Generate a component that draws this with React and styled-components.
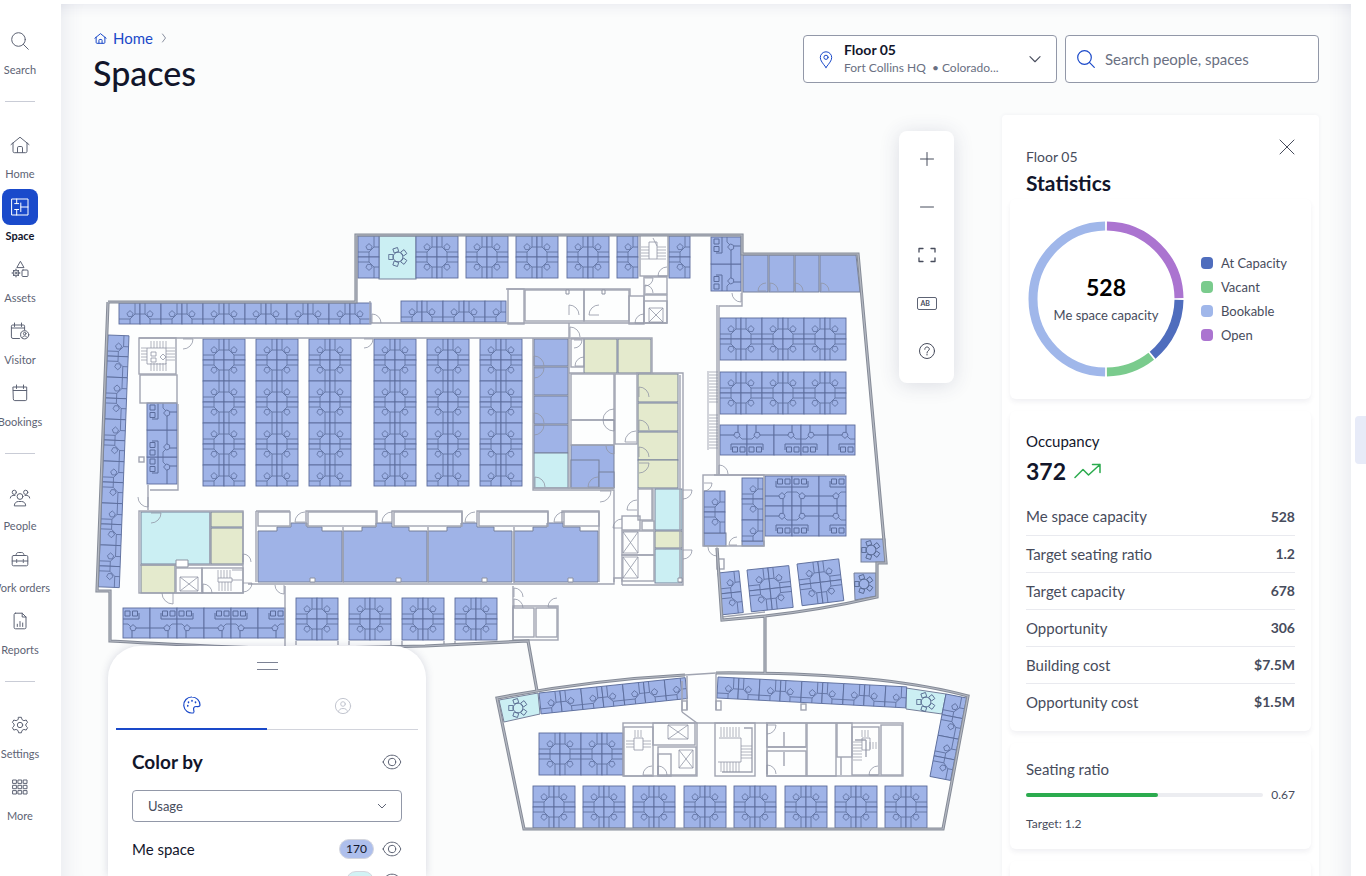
import React from 'react'
import styled, { createGlobalStyle } from 'styled-components'

const GlobalStyle = createGlobalStyle`
    * {
        box-sizing: border-box;
    }
    body {
        margin: 0;
        background-color: #fff;
        color: #474c5c;
        font-family: Lato, "Noto Sans", sans-serif;
        font-size: 14px;
    }
    button, input, select {
        font-family: inherit;
        color: inherit;
    }
    button {
        padding: 0;
        border: 0;
        background: none;
        cursor: pointer;
    }
    svg {
        flex: none;
    }
`

/* ---------- page ---------- */

const Page = styled.div`
    display: flex;
    height: 100vh;
    padding-top: 4px;
    overflow: hidden;
`
const Sidebar = styled.nav`
    flex: 0 0 61px;
    display: flex;
    justify-content: center;
    padding: 19px 21px 0 0;
    overflow: hidden;
    background-color: #fff;
`
const NavList = styled.div`
    flex: 0 0 80px;
    display: flex;
    flex-direction: column;
    align-items: center;
`
const NavGroup = styled.div`
    display: flex;
    flex-direction: column;
    gap: 7px;

    & + & {
        margin-top: 23px;
        padding-top: 26px;
        background: linear-gradient(#c9ccd6, #c9ccd6) top center / 30px 1px no-repeat;
    }
`
const NavItem = styled.a`
    display: flex;
    flex-direction: column;
    align-items: center;
    gap: 3px;
    width: 80px;
    font-size: 11px;
    line-height: 16px;
    font-weight: ${p => (p.$active ? 700 : 400)};
    color: ${p => (p.$active ? '#12162b' : '#5d6374')};
    text-decoration: none;
`
const NavIcon = styled.span`
    display: flex;
    align-items: center;
    justify-content: center;
    width: 36px;
    height: 36px;
    border-radius: 8px;
    background-color: ${p => (p.$active ? '#1a4acb' : 'transparent')};
    color: ${p => (p.$active ? '#fff' : '#5d6374')};
`
const Main = styled.main`
    flex: 1;
    min-width: 0;
    display: flex;
    flex-direction: column;
    padding: 0 32px;
    background-color: #fbfcfc;
    box-shadow: inset 24px 0 20px -20px rgba(70, 75, 130, 0.1), inset -24px 0 20px -20px rgba(70, 75, 130, 0.1),
        inset 0 14px 14px -13px rgba(70, 75, 130, 0.12);
`
const RightRail = styled.div`
    flex: 0 0 15px;
    display: flex;
    justify-content: flex-end;
    align-items: center;
    background-color: #fff;
`
const RailHandle = styled.button`
    width: 11px;
    height: 48px;
    border-radius: 4px 0 0 4px;
    background-color: #e7ebf8;
`

/* ---------- header ---------- */

const Header = styled.header`
    display: flex;
    justify-content: space-between;
    height: 111px;
    padding-top: 23px;
`
const Crumbs = styled.div`
    display: flex;
    align-items: center;
    gap: 5px;
    height: 22px;
    color: #8a90a0;
`
const CrumbLink = styled.a`
    display: flex;
    align-items: center;
    gap: 5px;
    font-size: 15px;
    color: #1a49c9;
    text-decoration: none;
`
const Title = styled.h1`
    margin: 4px 0 0;
    font-size: 34px;
    line-height: 40px;
    font-weight: 500;
    color: #12162b;
`
const Pickers = styled.div`
    display: flex;
    gap: 8px;
    padding-top: 8px;
`
const FloorPicker = styled.button`
    display: flex;
    align-items: center;
    gap: 6px;
    width: 254px;
    height: 48px;
    padding: 0 10px;
    border: 1px solid #9298a8;
    border-radius: 4px;
    background-color: #fff;
    text-align: left;
`
const PickerText = styled.span`
    flex: 1;
    display: flex;
    flex-direction: column;
    font-size: 12px;
    line-height: 18px;
    color: #6a7082;
    white-space: pre;
`
const PickerName = styled.strong`
    font-size: 14px;
    color: #12162b;
`
const SearchBox = styled.label`
    display: flex;
    align-items: center;
    gap: 5px;
    width: 254px;
    height: 48px;
    padding: 0 8px;
    border: 1px solid #9298a8;
    border-radius: 4px;
    background-color: #fff;
`
const SearchInput = styled.input`
    flex: 1;
    min-width: 0;
    border: 0;
    outline: 0;
    background: none;
    font-size: 15px;

    &::placeholder {
        color: #6a7082;
        opacity: 1;
    }
`
const BlueIcon = styled.span`
    display: flex;
    color: #1a49c9;
`

/* ---------- map ---------- */

const Stage = styled.div`
    flex: 1;
    min-height: 0;
    display: flex;
`
const Canvas = styled.section`
    position: relative;
    flex: 1;
    min-width: 0;
`
const Plan = styled.svg`
    display: block;
    width: 100%;
    height: 100%;
`
const Tools = styled.div`
    position: absolute;
    top: 16px;
    right: 48px;
    width: 55px;
    padding: 4px 0 8px;
    border-radius: 8px;
    background-color: #fff;
    box-shadow: 0 2px 20px rgba(50, 55, 100, 0.16);
`
const ToolButton = styled.button`
    display: flex;
    align-items: center;
    justify-content: center;
    width: 100%;
    height: 48px;
    color: #474c5c;
`
const LabelBox = styled.span`
    width: 20px;
    height: 13px;
    padding-left: 3px;
    border: 1px solid #5d6374;
    border-radius: 2px;
    font-size: 7px;
    line-height: 11px;
    font-weight: 700;
    text-align: left;
`
const Sheet = styled.section`
    position: absolute;
    left: 15px;
    bottom: 0;
    width: 318px;
    height: 230px;
    padding: 16px 8px 0;
    overflow: hidden;
    border-radius: 32px 32px 0 0;
    background-color: #fff;
    box-shadow: 0 0 8px rgba(50, 55, 100, 0.18);
`
const Grip = styled.div`
    width: 21px;
    height: 8px;
    margin: 0 auto;
    border: solid #7c8294;
    border-width: 1px 0;
`
const Tabs = styled.div`
    display: flex;
    margin-top: 12px;
`
const Tab = styled.button`
    flex: 1;
    display: flex;
    align-items: center;
    justify-content: center;
    height: 48px;
    border-bottom: ${p => (p.$active ? '2px solid #1a49c9' : '1px solid #d2d4dc')};
    color: ${p => (p.$active ? '#1a49c9' : '#c3c6d0')};
`
const SheetBody = styled.div`
    padding: 16px 16px 0;
`
const SheetRow = styled.div`
    display: flex;
    align-items: center;
    gap: 6px;
    height: 32px;
    margin-right: -2px;
    font-size: 14px;
    color: #12162b;
`
const RowName = styled.span`
    flex: 1;
    font-size: 15px;
`
const SheetTitle = styled.h2`
    flex: 1;
    margin: 0;
    font-size: 19px;
    line-height: 24px;
`
const Eye = styled.button`
    display: flex;
    color: #5d6374;
`
const Count = styled.span`
    padding: 0 6px;
    border: 1px solid #d4d6de;
    border-radius: 10px;
    background-color: ${p => p.$color};
    font-size: 12px;
    line-height: 18px;
`
const SelectWrap = styled.div`
    display: grid;
    align-items: center;
    margin: 12px 0 11px;
    color: #5d6374;

    > * {
        grid-area: 1 / 1;
    }
    > svg {
        justify-self: end;
        margin-right: 12px;
        pointer-events: none;
    }
`
const UsageSelect = styled.select`
    appearance: none;
    width: 100%;
    height: 32px;
    padding: 0 15px;
    border: 1px solid #9298a8;
    border-radius: 4px;
    background-color: #fff;
    font-size: 13px;
    color: #474c5c;
`

/* ---------- statistics ---------- */

const Panel = styled.aside`
    flex: 0 0 317px;
    padding: 0 8px;
    overflow: hidden;
    border-radius: 4px 4px 0 0;
    background-color: #fff;
    box-shadow: 0 0 4px rgba(50, 55, 100, 0.06);
`
const PanelHead = styled.div`
    display: flex;
    justify-content: space-between;
    height: 84px;
    padding: 32px 16px 0;
`
const CloseButton = styled.button`
    display: flex;
    align-items: center;
    justify-content: center;
    width: 16px;
    height: 16px;
    margin-top: -8px;
    color: #474c5c;
`
const Floor = styled.div`
    line-height: 20px;
`
const PanelTitle = styled.h2`
    margin: 4px 0 0;
    font-size: 21px;
    line-height: 24px;
    color: #12162b;
`
const Card = styled.section`
    margin-bottom: 12px;
    padding: ${p => p.$pad || '16px'};
    border-radius: 6px;
    background-color: #fff;
    box-shadow: 0 3px 5px rgba(50, 55, 100, 0.07);
`
const ChartRow = styled.div`
    display: flex;
    align-items: center;
    gap: 16px;
`
const Donut = styled.div`
    display: grid;
    place-items: center;

    > * {
        grid-area: 1 / 1;
    }
`
const DonutText = styled.div`
    font-size: 13px;
    line-height: 20px;
    text-align: center;
`
const DonutValue = styled.strong`
    display: block;
    margin-bottom: 4px;
    font-size: 23px;
    line-height: 28px;
    color: #000;
`
const Legend = styled.ul`
    margin: 0;
    padding: 0;
    list-style: none;
    font-size: 13px;
    line-height: 24px;
`
const LegendItem = styled.li`
    display: flex;
    align-items: center;
    gap: 8px;

    &::before {
        content: '';
        width: 12px;
        height: 12px;
        border-radius: 4px;
        background-color: ${p => p.$color};
    }
`
const CardTitle = styled.h3`
    margin: 0;
    font-size: 15px;
    line-height: 20px;
    font-weight: 400;
    color: ${p => (p.$dark ? '#12162b' : '#474c5c')};
`
const Occupied = styled.div`
    display: flex;
    align-items: center;
    gap: 8px;
    margin: 4px 0 11px;
    font-size: 23px;
    line-height: 32px;
    font-weight: 700;
    color: #12162b;
`
const Trend = styled.span`
    display: flex;
    color: #2bab4e;
`
const Figures = styled.table`
    width: 100%;
    border-collapse: collapse;
    font-size: 15px;

    th, td {
        height: 37px;
        padding: 0;
        border-bottom: 1px solid #e9eaef;
        font-weight: 400;
        text-align: left;
    }
    td {
        font-size: 14px;
        font-weight: 700;
        text-align: right;
    }
    tr:last-child > * {
        border-bottom: 0;
    }
`
const RatioRow = styled.div`
    display: flex;
    align-items: center;
    gap: 8px;
    margin: 6px 0 10px;
    font-size: 12px;
    line-height: 20px;
`
const Track = styled.div`
    flex: 1;
    height: 4px;
    border-radius: 2px;
    background-color: #ecedf1;
`
const Bar = styled.div`
    height: 4px;
    border-radius: 2px;
    background-color: #2bab4e;
`
const Target = styled.div`
    font-size: 12px;
    line-height: 18px;
`

/* ---------- icons ---------- */

const icons = {
    search: <><circle cx="10.5" cy="10.5" r="6.8" /><path d="M15.4 15.4 20.3 20.3" /></>,
    home: <path d="M3 11.6 12 4.2l9 7.4M5 10v8.3a1.4 1.4 0 0 0 1.4 1.4h11.2a1.4 1.4 0 0 0 1.4-1.4V10M9.5 19.5v-4.7a1.3 1.3 0 0 1 1.3-1.3h2.4a1.3 1.3 0 0 1 1.3 1.3v4.7" />,
    space: <path d="M4 4h16v16H4zM8.7 4v4.6M6.7 8.6h4M12.8 8v8.6M12.8 12H20M8.7 14.5V20M6.7 14.5h4" />,
    assets: <><path d="m12.6 4.6 3.4 6H9.2zM15 13h4a1 1 0 0 1 1 1v4.5a1 1 0 0 1-1 1h-4a1 1 0 0 1-1-1V14a1 1 0 0 1 1-1z" /><circle cx="8" cy="16" r="2.9" /><circle cx="8" cy="16" r="1" /><path d="M8 12v1M8 19v1M4 16h1M11 16h1M5.3 13.3l.7.7M10 18l.7.7M5.3 18.7l.7-.7M10 14l.7-.7" /></>,
    visitor: <><path d="M11.500 19.500H5a1.600 1.600 0 0 1-1.600-1.600V7.200A1.200 1.200 0 0 1 4.600 6h10.800a1.200 1.200 0 0 1 1.200 1.200V11M3.400 9h13.200M6.500 4v3.500M13.500 4v3.500" /><circle cx="16.700" cy="15.800" r="4.100" /><circle cx="16.700" cy="14.600" r="1.300" /><path d="M14.500 18.300c.7-2 3.700-2 4.400 0" /></>,
    calendar: <path d="M5.300 6h13.400v12.200a1.400 1.400 0 0 1-1.400 1.400H6.700a1.400 1.400 0 0 1-1.400-1.400zM5.300 9.500h13.400M8.500 4v3.500M15.500 4v3.500" />,
    people: <><circle cx="12" cy="11.500" r="2.900" /><circle cx="6.300" cy="7.300" r="2.100" /><circle cx="17.700" cy="7.300" r="2.100" /><path d="M6.300 20.500c0-2.600 2-4 4.200-4h3c2.200 0 4.200 1.400 4.200 4zM2.300 13c.2-1.800 1.500-3 4.700-2.600M21.700 13c-.2-1.800-1.500-3-4.700-2.600" /></>,
    work: <path d="M5.500 8.500h13a1.300 1.300 0 0 1 1.300 1.300v7.700a1.300 1.300 0 0 1-1.300 1.300h-13a1.300 1.300 0 0 1-1.300-1.300V9.800a1.300 1.300 0 0 1 1.300-1.300zM8 8.500C8 6.500 9 5.500 10.300 5.500h3.400c1.300 0 2.300 1 2.300 3M4.200 14h4M9.500 14h5M16 14h3.800M8.700 12.500v3M15.300 12.500v3" />,
    reports: <path d="M7.500 4.200h6.700l3.800 3.800v10.400a1.400 1.400 0 0 1-1.400 1.400H7.500A1.400 1.400 0 0 1 6.100 18.400V5.600a1.400 1.400 0 0 1 1.400-1.400zM14.200 4.200V8H18M9.300 17.500v-2.300M12 17.500v-5M14.700 17.500v-3.500" />,
    settings: <><circle cx="12" cy="12" r="2.700" /><path d="M10.600 4.300h2.800l.6 2.300 1.900 1.100 2.300-.7 1.400 2.400-1.700 1.600v2l1.700 1.700-1.400 2.400-2.300-.7-1.900 1.100-.6 2.300h-2.800L10 17.500l-1.900-1.100-2.300.7-1.400-2.400L6.100 13v-2L4.400 9.400 5.800 7l2.300.7L10 6.600z" /></>,
    more: <path d="M5 5h3.400v3.400H5zM10.300 5h3.400v3.400h-3.400zM15.600 5H19v3.400h-3.400zM5 10.300h3.400v3.400H5zM10.300 10.300h3.400v3.400h-3.400zM15.600 10.300H19v3.400h-3.400zM5 15.600h3.400V19H5zM10.300 15.600h3.400V19h-3.400zM15.600 15.600H19V19h-3.400z" />,
    pin: <><path d="M12 20.500c-3.200-4.300-5.700-6.800-5.700-10a5.700 5.700 0 0 1 11.400 0c0 3.200-2.500 5.700-5.700 10z" /><circle cx="12" cy="10.300" r="2.100" /></>,
    down: <path d="m6.500 9.500 5.500 5.500 5.500-5.500" />,
    right: <path d="m9 4 6 8-6 8" />,
    plus: <path d="M12 5.500v13M5.500 12h13" />,
    minus: <path d="M5.500 12h13" />,
    frame: <path d="M4 9V5.500h4M16 5.500h4V9M20 15v3.500h-4M8 18.500H4V15" />,
    help: <><circle cx="12" cy="12" r="7.500" /><path d="M9.800 10.300c0-1.500 1-2.300 2.200-2.300s2.300.8 2.300 2.100c0 1.700-2.300 1.700-2.300 3.500M12 15v1" /></>,
    close: <path d="m5 5 14 14M19 5 5 19" />,
    trend: <path d="m1 18.500 8-8 5.500 5.500L26 5.500M18.500 5.500H26v8" />,
    palette: <><path d="M12 4a8 8 0 1 0 1.500 15.800c1-.3.500-1.600.2-2.700-.5-2 .3-3.600 2.500-3.600 1.500 0 3.800.5 3.800-1.500A8 8 0 0 0 12 4z" /><path d="M7.800 12.500v.6M8.500 9v.6M12 7.500v.6M15.500 9v.6" strokeWidth="1.600" /></>,
    person: <><circle cx="12" cy="12" r="7.600" /><circle cx="12" cy="10" r="2.300" /><path d="M7.500 17.800c.4-2.400 2-3.300 4.500-3.300s4.100.9 4.500 3.300" /></>,
    eye: <><path d="M3.200 12C5 7.300 8 5.200 12 5.200s7 2.100 8.800 6.800c-1.800 4.700-4.800 6.800-8.800 6.800S5 16.700 3.200 12z" /><circle cx="12" cy="12" r="3.700" /></>,
}

const Icon = ({ name, size = 24, width = 24, weight = 1 }) => (
    <svg width={size * width / 24} height={size} viewBox={`0 0 ${width} 24`} fill="none" stroke="currentColor"
        strokeWidth={weight} strokeLinecap="round" strokeLinejoin="round" aria-hidden="true">
        {icons[name]}
    </svg>
)

/* ---------- floor plan ---------- */

const BLUE = '#9fb3e7'
const CYAN = '#cbeff3'
const OLIVE = '#e4eacd'

// grid of desks, every second one is mirrored so that four make a pod
const Desks = ({ x, y, cols = 1, rows = 1, turn = 0, flipX = 0, flipY = 0, kind = 'desk' }) => {
    const w = kind === 'desk' ? 21 : 27
    const h = kind === 'desk' ? 21 : 30
    const cells = []
    for (let r = 0; r < rows; r++) {
        for (let c = 0; c < cols; c++) {
            const mx = (c + flipX) % 2
            const my = (r + flipY) % 2
            cells.push(
                <use key={`${r}-${c}`} href={`#${kind}`}
                    transform={`translate(${(c + mx) * w} ${(r + my) * h}) scale(${mx ? -1 : 1} ${my ? -1 : 1})`} />
            )
        }
    }
    return <g transform={`translate(${x} ${y}) rotate(${turn})`}>{cells}</g>
}

const Door = ({ x, y, r = 10, turn = 0 }) => (
    <path d={`M0 0V${-r}A${r} ${r} 0 0 1 ${r} 0`} transform={`translate(${x} ${y}) rotate(${turn})`} />
)

const Lift = ({ x, y, w, h }) => <path d={`M${x} ${y}h${w}v${h}h${-w}zl${w} ${h}M${x + w} ${y}l${-w} ${h}`} />

const Steps = ({ x, y, w, h, step = 3 }) => {
    let d = ''
    if (w > h) for (let i = 0; i <= w; i += step) d += `M${x + i} ${y}v${h}`
    else for (let i = 0; i <= h; i += step) d += `M${x} ${y + i}h${w}`
    return <path d={d} strokeWidth="0.7" />
}

const RoundTable = ({ x, y }) => (
    <g transform={`translate(${x} ${y})`} fill="none" stroke="#4f6189" strokeWidth="0.8">
        <circle r="4.800" />
        {[0, 72, 144, 216, 288].map(a => (
            <rect key={a} x="5" y="-2.400" width="4.200" height="4.800" transform={`rotate(${a + 36})`} />
        ))}
    </g>
)

const rooms = [
    [379, 236, 37, 43, CYAN],
    [534, 339, 34, 27, BLUE], [534, 367, 34, 28, BLUE], [534, 396, 34, 28, BLUE], [534, 425, 34, 28, BLUE],
    [534, 453, 34, 35, CYAN],
    [584, 339, 33, 34, OLIVE], [618, 339, 33, 34, OLIVE],
    [638, 374, 40, 28, OLIVE], [638, 403, 40, 28, OLIVE], [638, 432, 40, 28, OLIVE], [638, 460, 40, 28, OLIVE],
    [571, 445, 43, 43, BLUE], [571, 460, 28, 28, BLUE], [599, 472, 15, 16, BLUE],
    [655, 489, 27, 41, CYAN], [655, 531, 27, 17, OLIVE], [655, 549, 27, 34, CYAN],
    [141, 512, 69, 52, CYAN], [211, 512, 32, 15, OLIVE], [211, 528, 32, 36, OLIVE], [141, 565, 34, 28, OLIVE],
    [743, 255, 25, 37, BLUE], [769, 255, 25, 37, BLUE], [795, 255, 24, 37, BLUE],
    [742, 541, 22, 5, BLUE], [704, 533, 22, 13, BLUE],
    [861, 539, 24, 23, BLUE],
]

const walls = [
    [508, 289, 16, 35], [525, 290, 59, 31], [584, 290, 45, 31], [629, 296, 15, 28], [644, 295, 23, 28], [644, 301, 23, 22],
    [139, 338, 37, 36], [140, 375, 37, 28],
    [571, 374, 43, 46], [571, 420, 43, 25], [615, 374, 22, 70], [571, 339, 13, 28],
    [258, 512, 32, 14], [308, 512, 68, 14], [394, 512, 68, 14], [479, 512, 69, 14], [564, 512, 35, 14],
    [139, 511, 104, 82], [176, 568, 26, 25], [202, 568, 41, 25],
    [513, 608, 21, 29], [536, 608, 21, 29], [513, 606, 45, 34],
    [638, 489, 15, 31], [622, 516, 18, 14], [622, 531, 32, 24], [622, 555, 32, 26], [642, 521, 12, 9],
    [623, 723, 74, 53], [624, 727, 29, 49], [653, 723, 42, 22], [658, 747, 38, 28], [658, 754, 13, 22],
    [715, 723, 40, 53], [767, 723, 136, 53], [767, 723, 39, 24], [767, 751, 39, 25], [807, 723, 29, 53],
    [837, 723, 15, 34], [852, 727, 27, 48], [881, 725, 21, 50],
    [703, 475, 61, 71], [717, 559, 7, 10], [640, 235, 28, 41], [644, 277, 23, 17],
    [682, 701, 5, 9], [716, 701, 5, 9], [801, 704, 5, 6], [139, 457, 5, 5],
]

const FLOOR = 'M108 302H356V235H742V254H858L886 563H877V597Q820 610 765 616L722 620L717 548M765 616V674'
const SOUTH_EAST = 'M108 302L97 591H110V641Q180 645 285 649L425 646L528 641L537 691'
const WING = 'M685 675Q590 680 497 698L524 829H943L968 696Q880 672 716 673'

const FloorPlan = () => (
    <Plan viewBox="93 115 909 761" preserveAspectRatio="xMinYMin meet" role="img" aria-label="Floor 05 plan">
        <defs>
            <g id="desk" fill="none" stroke="#5b6c9b" strokeWidth="0.9">
                <rect width="21" height="21" fill={BLUE} />
                <path d="M16 0V11L11 16H0M11 16V21M16 11H21" strokeWidth="0.8" />
                <path d="M11 7.600L14.200 10.500L12.800 13.600H9.400L7.900 10.500Z" fill={BLUE} strokeWidth="0.8" />
            </g>
            <g id="office" fill="none" stroke="#5b6c9b" strokeWidth="0.9">
                <rect width="27" height="30" fill={BLUE} />
                <path d="M2 3h5v5H2zM9.500 3h5v5h-5zM0 11H16V5M12 20H27M9 23V30" strokeWidth="1" />
                <path d="M0 16H5L8 19" strokeWidth="0.8" />
                <path d="M10 16.600L13.200 19.500L11.800 22.600H8.400L6.900 19.500Z" fill={BLUE} />
            </g>
        </defs>

        <path d="M108 302H356V235H742V254H858L886 563H877V597L765 616V674L716 673L685 675L537 691L528 641L285 649L110 641V591H97Z" fill="#fdfefe" />
        <path d={WING} fill="#fdfefe" />

        <g stroke="#76809a" strokeWidth="1">
            {rooms.map(([x, y, w, h, fill]) => (
                <rect key={`${x}-${y}`} x={x} y={y} width={w} height={h} fill={fill} />
            ))}
            <path d="M820 255H856L860 292H820Z" fill={BLUE} />
            <path d="M854 573H876V596L855 600Z" fill={BLUE} />
            <path d="M499 700L538 693L540 714L504 722Z" fill={CYAN} />
            <path d="M906 688L946 694L942 714L906 709Z" fill={CYAN} />
            {[258, 343, 428, 514].map(x => (
                <path key={x} fill={BLUE}
                    d={x === 258
                        ? 'M258 582V531H277V527H291V523H307V527H322V531H342V582Z'
                        : `M${x} 582V531h19v-4h14v-4h16v4h17v4h18V582Z`} />
            ))}
        </g>

        <Desks x={358} y={236} rows={2} />
        {[416, 466, 516, 567].map(x => <Desks key={x} x={x} y={236} cols={2} rows={2} />)}
        <Desks x={617} y={236} rows={2} />
        <Desks x={669} y={236} rows={2} />
        <Desks x={711} y={291} cols={2} turn={-90} kind="office" />
        <Desks x={119} y={303} cols={12} />
        <Desks x={401} y={301} cols={5} />
        <Desks x={108} y={335} rows={12} turn={2.200} />
        <Desks x={147} y={484} cols={3} flipX={1} turn={-90} kind="office" />
        {[203, 256, 309, 374, 427, 480].map(x => <Desks key={x} x={x} y={339} cols={2} rows={7} />)}
        <Desks x={720} y={318} cols={6} rows={2} />
        <Desks x={720} y={372} cols={6} rows={2} />
        <Desks x={720} y={425} cols={5} flipX={1} flipY={1} kind="office" />
        <Desks x={765} y={476} cols={3} rows={2} flipX={1} kind="office" />
        <Desks x={742} y={478} rows={3} />
        <Desks x={704} y={491} rows={2} />
        <Desks x={718} y={573} rows={2} turn={-6} />
        <Desks x={747} y={570} cols={2} rows={2} turn={-6} />
        <Desks x={797} y={564} cols={2} rows={2} turn={-7} />
        <Desks x={123} y={608} cols={6} kind="office" />
        {[296, 349, 402, 455].map(x => <Desks key={x} x={x} y={598} cols={2} rows={2} />)}
        <Desks x={539} y={693} cols={7} turn={-6} />
        <Desks x={718} y={677} cols={9} turn={3} />
        <Desks x={946} y={694} rows={4} turn={11} />
        <Desks x={539} y={733} cols={4} rows={2} />
        {[533, 583, 633, 684, 734, 785, 835, 885].map(x => <Desks key={x} x={x} y={786} cols={2} rows={2} />)}

        <RoundTable x={398} y={257} />
        <RoundTable x={871} y={550} />
        <RoundTable x={864} y={584} />
        <RoundTable x={518} y={708} />
        <RoundTable x={926} y={702} />

        <g fill="none" stroke="#a0a4b1" strokeWidth="1.400">
            {walls.map(([x, y, w, h]) => (
                <rect key={`${x}-${y}-${w}-${h}`} x={x} y={y} width={w} height={h} />
            ))}
            <path d="M139 338H652V373M370 301V323H667M506 289H630V296M719 475V306H742V254M717 475V305M714 475H845" />
            <path d="M569 323V373H584M569 373V489M533 338V490H614V582M533 488H614M636 373H683V585H622M680 375V583M652 488V520M653 373V374" />
            <path d="M148 485V510M150 490H178V404M256 582V511M256 584H614V578H622V585M256 511H290M306 526V511H377V523M392 523V511H462V523M477 523V511H548V523M562 523V511H599V582M343 527V583M428 527V583M514 527V583" />
            <path d="M285 586V646M513 586V640M248 584H256M140 565H243M210 512V564M682 681V712M687 676V710M716 674V710M682 712L697 723H767M685 675L716 673M722 617L765 612" />
            <path d="M296 641V645M338 641V645M349 641V645M391 641V645M402 641V645M444 641V645M455 641V643M497 641V642" />
            <path d="M784 732V747M784 752V766M767 747H806M855 740H866M841 757V775M866 740V757M744 728H752V772H722" />
        </g>
        <path d="M566 290h3v4h-3zM602 290h3v4h-3zM310 578h5v4h-5zM396 578h5v4h-5zM482 578h5v4h-5zM568 578h5v4h-5zM678 578h4v4h-4zM176 560h12v7h-12z"
            fill="#fff" stroke="#8d92a1" strokeWidth="1" />

        <g fill="none" stroke="#9196a5" strokeWidth="0.800">
            <Lift x={180} y={577} w={18} h={14} />
            <Lift x={649} y={308} w={14} h={14} />
            <Lift x={623} y={532} w={15} h={21} />
            <Lift x={623} y={557} w={15} h={21} />
            <Lift x={668} y={725} w={20} h={14} />
            <Lift x={679} y={750} w={14} h={18} />
            <Steps x={709} y={372} w={9} h={31} />
            <Steps x={709} y={415} w={9} h={34} />
            <path d="M708 371V450" />
            <Steps x={151} y={341} w={15} h={7} />
            <Steps x={151} y={363} w={15} h={8} />
            <Steps x={141} y={348} w={6} h={14} />
            <Steps x={166} y={348} w={9} h={14} />
            <path d="M147 348H166V364H147ZM151 352h5v4h-5zM151 358h5v4h-5zM163 354l3 3-3 3-3-3z" />
            <Steps x={641} y={247} w={8} h={12} />
            <Steps x={657} y={247} w={9} h={12} />
            <path d="M649 242h8v17h-8zM653 238l4 8" />
            <Steps x={218} y={570} w={12} h={8} />
            <Steps x={219} y={582} w={12} h={9} />
            <path d="M218 578h14v4h-14zM232 570h10M232 580h10" />
            <Steps x={721} y={727} w={19} h={10} />
            <Steps x={721} y={762} w={19} h={10} />
            <Steps x={741} y={746} w={11} h={14} />
            <path d="M719 738H741V762H718" />
            <Steps x={635} y={730} w={8} h={7} />
            <Steps x={626} y={741} w={8} h={8} />
            <Steps x={643} y={741} w={8} h={8} />
            <path d="M634 738h9v12h-9z" />
            <Steps x={862} y={730} w={8} h={7} />
            <Steps x={853} y={742} w={9} h={20} />
            <Steps x={870} y={742} w={8} h={7} />
            <path d="M862 738h8v12h-8z" />

            <Door x={183} y={339} turn={90} />
            <Door x={364} y={339} turn={90} r={9} />
            <Door x={372} y={323} r={9} />
            <Door x={534} y={366} />
            <Door x={534} y={368} turn={90} />
            <Door x={534} y={423} />
            <Door x={534} y={425} turn={90} />
            <Door x={535} y={487} />
            <Door x={570} y={337} />
            <Door x={574} y={340} turn={90} r={8} />
            <Door x={584} y={366} turn={-90} r={9} />
            <Door x={614} y={420} turn={-90} r={11} />
            <Door x={614} y={420} turn={180} r={11} />
            <Door x={636} y={442} turn={-90} r={11} />
            <Door x={614} y={446} turn={180} r={8} />
            <Door x={598} y={487} turn={-90} />
            <Door x={600} y={491} turn={90} r={11} />
            <Door x={639} y={397} />
            <Door x={639} y={430} />
            <Door x={639} y={457} />
            <Door x={639} y={463} turn={90} />
            <Door x={569} y={315} />
            <Door x={599} y={315} turn={-90} />
            <Door x={644} y={323} turn={-90} r={9} />
            <Door x={645} y={293} r={8} />
            <Door x={645} y={278} turn={90} r={8} />
            <Door x={667} y={276} turn={-90} r={9} />
            <Door x={766} y={291} turn={-90} r={8} />
            <Door x={770} y={291} r={8} />
            <Door x={795} y={291} r={8} />
            <Door x={821} y={291} r={8} />
            <Door x={741} y={293} turn={180} r={9} />
            <Door x={719} y={474} r={9} />
            <Door x={683} y={490} turn={90} r={9} />
            <Door x={683} y={550} turn={90} r={9} />
            <Door x={704} y={483} turn={90} r={8} />
            <Door x={737} y={545} turn={-90} r={8} />
            <Door x={717} y={547} turn={180} r={9} />
            <Door x={148} y={497} turn={180} />
            <Door x={151} y={513} turn={90} />
            <Door x={173} y={593} turn={180} r={11} />
            <Door x={243} y={562} r={8} />
            <Door x={243} y={583} turn={90} r={9} />
            <Door x={305} y={522} turn={-90} />
            <Door x={392} y={522} turn={-90} />
            <Door x={475} y={522} turn={-90} />
            <Door x={564} y={522} turn={-90} />
            <Door x={284} y={585} turn={180} r={9} />
            <Door x={203} y={593} r={9} />
            <Door x={514} y={597} r={9} />
            <Door x={514} y={608} r={9} />
            <Door x={557} y={607} turn={-90} r={9} />
            <Door x={637} y={510} turn={-90} />
            <Door x={622} y={528} turn={-90} r={9} />
            <Door x={652} y={775} turn={-90} r={9} />
            <Door x={658} y={775} r={9} />
            <Door x={767} y={725} turn={90} r={9} />
            <Door x={767} y={774} r={9} />
            <Door x={878} y={775} turn={-90} r={9} />
        </g>

        <g fill="none" strokeLinejoin="miter">
            <path d={FLOOR} stroke="#858b97" strokeWidth="3.200" />
            <path d={SOUTH_EAST} stroke="#858b97" strokeWidth="3.200" />
            <path d={WING} stroke="#858b97" strokeWidth="3.200" />
            <path d={FLOOR} stroke="#b4b8c2" strokeWidth="1.200" />
            <path d={SOUTH_EAST} stroke="#b4b8c2" strokeWidth="1.200" />
            <path d={WING} stroke="#b4b8c2" strokeWidth="1.200" />
        </g>
    </Plan>
)

/* ---------- donut ---------- */

const shares = [
    { label: 'Open', color: '#ab74d0', from: 0, to: 90 },
    { label: 'At Capacity', color: '#4f6dbd', from: 90, to: 141 },
    { label: 'Vacant', color: '#7acb8d', from: 141, to: 180 },
    { label: 'Bookable', color: '#a0b7ea', from: 180, to: 360 },
]

const arc = (from, to, r) => {
    const point = deg => {
        const a = (deg - 90) * Math.PI / 180
        return `${78 + r * Math.cos(a)} ${78 + r * Math.sin(a)}`
    }
    return `M${point(from + 0.7)}A${r} ${r} 0 0 1 ${point(to - 0.7)}`
}

const navGroups = [
    [['search', 'Search']],
    [['home', 'Home'], ['space', 'Space'], ['assets', 'Assets'], ['visitor', 'Visitor'], ['calendar', 'Bookings']],
    [['people', 'People'], ['work', 'Work orders'], ['reports', 'Reports']],
    [['settings', 'Settings'], ['more', 'More']],
]

const legend = [
    ['At Capacity', '#4f6dbd'],
    ['Vacant', '#7acb8d'],
    ['Bookable', '#a0b7ea'],
    ['Open', '#ab74d0'],
]

const figures = [
    ['Me space capacity', '528'],
    ['Target seating ratio', '1.2'],
    ['Target capacity', '678'],
    ['Opportunity', '306'],
    ['Building cost', '$7.5M'],
    ['Opportunity cost', '$1.5M'],
]

const App = () => {
    return (
        <Page>
            <GlobalStyle />
            <Sidebar>
                <NavList>
                    {navGroups.map(group => (
                        <NavGroup key={group[0][0]}>
                            {group.map(([icon, label]) => (
                                <NavItem key={label} href="#" $active={icon === 'space'}>
                                    <NavIcon $active={icon === 'space'}><Icon name={icon} /></NavIcon>
                                    {label}
                                </NavItem>
                            ))}
                        </NavGroup>
                    ))}
                </NavList>
            </Sidebar>

            <Main>
                <Header>
                    <div>
                        <Crumbs>
                            <CrumbLink href="#"><Icon name="home" size={15} weight={1.600} />Home</CrumbLink>
                            <Icon name="right" size={12} weight={2} />
                        </Crumbs>
                        <Title>Spaces</Title>
                    </div>
                    <Pickers>
                        <FloorPicker aria-haspopup="listbox">
                            <BlueIcon><Icon name="pin" /></BlueIcon>
                            <PickerText>
                                <PickerName>Floor 05</PickerName>
                                <span>Fort Collins HQ  • Colorado...</span>
                            </PickerText>
                            <Icon name="down" size={22} weight={1.200} />
                        </FloorPicker>
                        <SearchBox>
                            <BlueIcon><Icon name="search" weight={1.200} /></BlueIcon>
                            <SearchInput aria-label="Search people, spaces" placeholder="Search people, spaces" />
                        </SearchBox>
                    </Pickers>
                </Header>

                <Stage>
                    <Canvas>
                        <FloorPlan />
                        <Tools>
                            <ToolButton aria-label="Zoom in"><Icon name="plus" /></ToolButton>
                            <ToolButton aria-label="Zoom out"><Icon name="minus" /></ToolButton>
                            <ToolButton aria-label="Fit to screen"><Icon name="frame" weight={1.300} /></ToolButton>
                            <ToolButton aria-label="Labels"><LabelBox>AB</LabelBox></ToolButton>
                            <ToolButton aria-label="Help"><Icon name="help" /></ToolButton>
                        </Tools>
                        <Sheet>
                            <Grip />
                            <Tabs>
                                <Tab $active aria-label="Colors"><Icon name="palette" weight={1.200} /></Tab>
                                <Tab aria-label="People"><Icon name="person" /></Tab>
                            </Tabs>
                            <SheetBody>
                                <SheetRow>
                                    <SheetTitle>Color by</SheetTitle>
                                    <Eye aria-label="Toggle all"><Icon name="eye" /></Eye>
                                </SheetRow>
                                <SelectWrap>
                                    <UsageSelect aria-label="Color by">
                                        <option>Usage</option>
                                    </UsageSelect>
                                    <Icon name="down" size={16} weight={1.500} />
                                </SelectWrap>
                                <SheetRow>
                                    <RowName>Me space</RowName>
                                    <Count $color="#aebfec">170</Count>
                                    <Eye aria-label="Toggle me space"><Icon name="eye" /></Eye>
                                </SheetRow>
                                <SheetRow>
                                    <RowName>We space</RowName>
                                    <Count $color="#d2f3f5">12</Count>
                                    <Eye aria-label="Toggle we space"><Icon name="eye" /></Eye>
                                </SheetRow>
                            </SheetBody>
                        </Sheet>
                    </Canvas>

                    <Panel>
                        <PanelHead>
                            <div>
                                <Floor>Floor 05</Floor>
                                <PanelTitle>Statistics</PanelTitle>
                            </div>
                            <CloseButton aria-label="Close"><Icon name="close" /></CloseButton>
                        </PanelHead>
                        <Card $pad="21px 17px">
                            <ChartRow>
                                <Donut>
                                    <svg width="158" height="158" viewBox="-1 -1 158 158" fill="none" strokeWidth="9">
                                        {shares.map(s => <path key={s.label} d={arc(s.from, s.to, 73)} stroke={s.color} />)}
                                    </svg>
                                    <DonutText>
                                        <DonutValue>528</DonutValue>
                                        Me space capacity
                                    </DonutText>
                                </Donut>
                                <Legend>
                                    {legend.map(([label, color]) => <LegendItem key={label} $color={color}>{label}</LegendItem>)}
                                </Legend>
                            </ChartRow>
                        </Card>
                        <Card $pad="20px 16px 11px">
                            <CardTitle $dark>Occupancy</CardTitle>
                            <Occupied>372 <Trend><Icon name="trend" width={28} weight={1.500} /></Trend></Occupied>
                            <Figures>
                                <tbody>
                                    {figures.map(([label, value]) => (
                                        <tr key={label}><th scope="row">{label}</th><td>{value}</td></tr>
                                    ))}
                                </tbody>
                            </Figures>
                        </Card>
                        <Card>
                            <CardTitle>Seating ratio</CardTitle>
                            <RatioRow>
                                <Track><Bar style={{ width: `${0.67 / 1.2 * 100}%` }} /></Track>
                                0.67
                            </RatioRow>
                            <Target>Target: 1.2</Target>
                        </Card>
                        <Card />
                    </Panel>
                </Stage>
            </Main>

            <RightRail>
                <RailHandle aria-label="Open side panel" />
            </RightRail>
        </Page>
    )
}

export default App
